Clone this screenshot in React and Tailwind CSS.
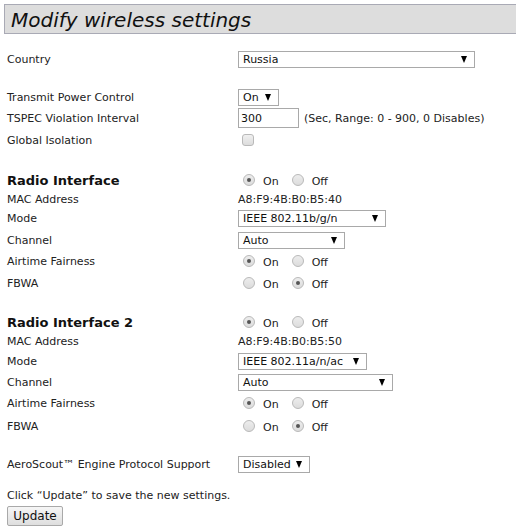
import React from 'react';

const font = { fontFamily: '"DejaVu Sans", Verdana, sans-serif' };

function Select({ value, width }) {
  return (
    <div
      className={`relative flex items-center h-[17px] border border-[#a9a9a9] bg-white pl-[4px] text-[11px] text-[#111] ${width}`}
    >
      <span className="translate-y-[1px]">{value}</span>
      <span className="absolute right-[7px] top-[4px] w-0 h-0 border-l-[3.5px] border-r-[3.5px] border-t-[7px] border-l-transparent border-r-transparent border-t-black" />
    </div>
  );
}

function Radio({ checked }) {
  return (
    <span className="relative block shrink-0 w-[12px] h-[12px] rounded-full border border-[#b9b9b9] bg-gradient-to-b from-[#ededed] to-[#dcdcdc]">
      {checked && (
        <span className="absolute left-[3px] top-[3px] w-[4px] h-[4px] rounded-full bg-[#555]" />
      )}
    </span>
  );
}

function OnOff({ on }) {
  return (
    <div className="flex items-center text-[11px] text-[#222] pl-[5px]">
      <Radio checked={on} />
      <span className="ml-[8px] translate-y-[2px]">On</span>
      <span className="ml-[13px] flex items-center"><Radio checked={!on} /></span>
      <span className="ml-[8px] translate-y-[2px]">Off</span>
    </div>
  );
}

function Row({ h, label, bold, children }) {
  return (
    <div className={`flex items-center ${h}`}>
      <div
        className={`w-[231px] shrink-0 translate-y-[1px] ${bold ? 'text-[13px] font-bold text-[#111]' : 'text-[11px] text-[#222]'}`}
      >
        {label}
      </div>
      {children}
    </div>
  );
}

export default function App() {
  return (
    <div className="w-[516px] h-[531px] overflow-hidden bg-white" style={font}>
      <div className="ml-[4px] mt-[4px] w-[520px] h-[30px] border border-[#a9aab5] bg-[#dddddd] flex items-center">
        <h1 className="pl-[6px] text-[20px] italic font-normal text-[#111] leading-none translate-y-[1px]">
          Modify wireless settings
        </h1>
      </div>

      <div className="px-[7px] pt-[15px]">
        <Row h="h-[20px]" label="Country">
          <Select value="Russia" width="w-[237px]" />
        </Row>

        <div className="h-[18px]" />
        <Row h="h-[20px]" label="Transmit Power Control">
          <Select value="On" width="w-[41px]" />
        </Row>
        <Row h="h-[22px]" label="TSPEC Violation Interval">
          <div className="flex items-center">
            <div className="w-[61px] h-[20px] border border-[#a9a9a9] pl-[2px] text-[11px] flex items-center text-[#111]">
              <span className="translate-y-[1px]">300</span>
            </div>
            <span className="ml-[5px] text-[11px] text-[#222] translate-y-[1px]">(Sec, Range: 0 - 900, 0 Disables)</span>
          </div>
        </Row>
        <Row h="h-[22px]" label="Global Isolation">
          <span className="ml-[4px] inline-block w-[12px] h-[12px] rounded-[3px] border border-[#b9b9b9] bg-gradient-to-b from-[#f0f0f0] to-[#dcdcdc]" />
        </Row>

        <div className="h-[19px]" />
        <Row h="h-[20px]" label="Radio Interface" bold>
          <OnOff on />
        </Row>
        <Row h="h-[18px]" label="MAC Address">
          <span className="text-[11px] text-[#222] translate-y-[1px]">A8:F9:4B:B0:B5:40</span>
        </Row>
        <Row h="h-[20px]" label="Mode">
          <Select value="IEEE 802.11b/g/n" width="w-[148px]" />
        </Row>
        <Row h="h-[24px]" label="Channel">
          <Select value="Auto" width="w-[107px]" />
        </Row>
        <Row h="h-[18px]" label="Airtime Fairness">
          <OnOff on />
        </Row>
        <Row h="h-[26px]" label="FBWA">
          <OnOff on={false} />
        </Row>

        <div className="h-[16px]" />
        <Row h="h-[20px]" label="Radio Interface 2" bold>
          <OnOff on />
        </Row>
        <Row h="h-[18px]" label="MAC Address">
          <span className="text-[11px] text-[#222] translate-y-[1px]">A8:F9:4B:B0:B5:50</span>
        </Row>
        <Row h="h-[22px]" label="Mode">
          <Select value="IEEE 802.11a/n/ac" width="w-[129px]" />
        </Row>
        <Row h="h-[20px]" label="Channel">
          <Select value="Auto" width="w-[155px]" />
        </Row>
        <Row h="h-[22px]" label="Airtime Fairness">
          <OnOff on />
        </Row>
        <Row h="h-[24px]" label="FBWA">
          <OnOff on={false} />
        </Row>

        <div className="h-[16px]" />
        <Row h="h-[20px]" label="AeroScout™ Engine Protocol Support">
          <Select value="Disabled" width="w-[72px]" />
        </Row>

        <div className="h-[12px]" />
        <div className="h-[18px] flex items-center text-[11px] text-[#222] translate-y-[1px]">
          Click “Update” to save the new settings.
        </div>
        <button
          type="button"
          className="mt-[2px] w-[56px] h-[20px] border border-[#a9a9a9] rounded-[2px] bg-gradient-to-b from-[#f6f6f6] to-[#dedede] text-[12px] text-[#111] flex items-center justify-center"
        >
          Update
        </button>
      </div>
    </div>
  );
}
